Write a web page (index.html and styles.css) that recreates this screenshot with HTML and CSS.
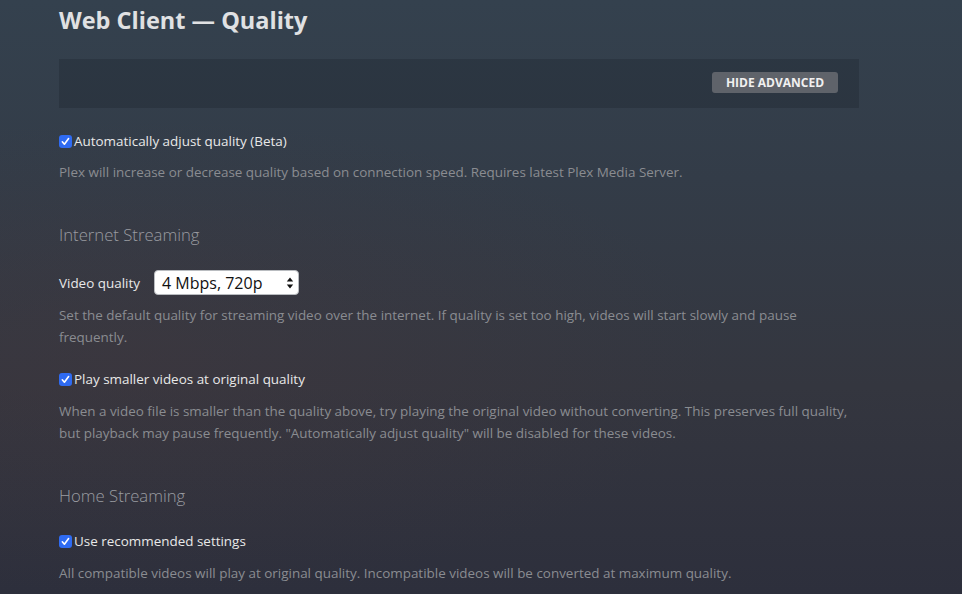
FILE: index.html
```html
<!DOCTYPE html>
<html>
<head>
<meta charset="utf-8">
<link rel="stylesheet" href="styles.css">
</head>
<body>
<div class="page">
  <h1 class="title">Web Client — Quality</h1>
  <div class="bar">
    <button class="btn">Hide Advanced</button>
  </div>

  <div class="group first">
    <label class="check-row"><span class="cb"><svg viewBox="0 0 13 13" width="13" height="13"><path d="M3.3 6.8 L5.4 9.2 L9.6 3.6" fill="none" stroke="#fff" stroke-width="1.6" stroke-linecap="round" stroke-linejoin="round"/></svg></span>Automatically adjust quality (Beta)</label>
    <p class="desc">Plex will increase or decrease quality based on connection speed. Requires latest Plex Media Server.</p>
  </div>

  <h2 class="section">Internet Streaming</h2>
  <div class="group">
    <div class="select-row">
      <span class="label">Video quality</span>
      <div class="select"><span>4 Mbps, 720p</span><svg class="arrows" viewBox="0 0 8 12" width="8" height="12"><path d="M4 0.5 L7.2 4.6 L0.8 4.6 Z M4 11.5 L7.2 7.4 L0.8 7.4 Z" fill="#111"/></svg></div>
    </div>
    <p class="desc">Set the default quality for streaming video over the internet. If quality is set too high, videos will start slowly and pause frequently.</p>
  </div>

  <div class="group">
    <label class="check-row"><span class="cb"><svg viewBox="0 0 13 13" width="13" height="13"><path d="M3.3 6.8 L5.4 9.2 L9.6 3.6" fill="none" stroke="#fff" stroke-width="1.6" stroke-linecap="round" stroke-linejoin="round"/></svg></span>Play smaller videos at original quality</label>
    <p class="desc">When a video file is smaller than the quality above, try playing the original video without converting. This preserves full quality, but playback may pause frequently. "Automatically adjust quality" will be disabled for these videos.</p>
  </div>

  <h2 class="section">Home Streaming</h2>
  <div class="group">
    <label class="check-row"><span class="cb"><svg viewBox="0 0 13 13" width="13" height="13"><path d="M3.3 6.8 L5.4 9.2 L9.6 3.6" fill="none" stroke="#fff" stroke-width="1.6" stroke-linecap="round" stroke-linejoin="round"/></svg></span>Use recommended settings</label>
    <p class="desc">All compatible videos will play at original quality. Incompatible videos will be converted at maximum quality.</p>
  </div>
</div>
</body>
</html>
```

FILE: styles.css
```css
html, body {
  margin: 0;
  height: 100%;
}
body {
  font-family: "Open Sans", "Noto Sans", sans-serif;
  background:
    radial-gradient(ellipse 60% 40% at 15% 60%, rgba(70, 55, 60, 0.35), rgba(70, 55, 60, 0) 100%),
    linear-gradient(180deg, #34414e 0%, #333c48 30%, #34363f 65%, #2d2f3c 100%);
  color: #eee;
  overflow: hidden;
}
.page {
  width: 800px;
  padding: 4px 0 0 59px;
}
.title {
  margin: 0;
  font-size: 23.5px;
  line-height: 32px;
  font-weight: 700;
  color: #e0e1e3;
}
.bar {
  margin-top: 23px;
  height: 49px;
  background: rgba(20, 25, 32, 0.22);
  display: flex;
  align-items: center;
  justify-content: flex-end;
  padding-right: 21px;
  box-sizing: border-box;
}
.btn {
  font-family: "Open Sans", sans-serif;
  font-size: 12px;
  font-weight: 700;
  text-transform: uppercase;
  color: #f0f0f0;
  background: #5f636a;
  border: 0;
  border-radius: 3px;
  height: 21px;
  width: 126px;
  padding: 0;
  margin-top: -2px;
  line-height: 21px;
}
.group {
  margin-top: 21px;
}
.group.first {
  margin-top: 23px;
}
.check-row {
  display: flex;
  align-items: center;
  height: 20px;
  font-size: 13.45px;
  color: #e8e8e8;
}
.cb {
  width: 13px;
  height: 13px;
  background: #2f6bf2;
  border-radius: 3px;
  margin-right: 2px;
  display: flex;
}
.desc {
  margin: 11px 0 0;
  font-size: 13.45px;
  line-height: 22px;
  color: #8a8c91;
}
.group.first .desc {
  margin-top: 10px;
}
.section {
  margin: 40px 0 23px;
  font-size: 16.7px;
  line-height: 24px;
  font-weight: 300;
  color: #9a9ca1;
}
.section + .group {
  margin-top: 0;
}
.select-row {
  display: flex;
  align-items: center;
  height: 25px;
}
.label {
  font-size: 13.45px;
  color: #e8e8e8;
  width: 95px;
}
.select {
  width: 145px;
  height: 25px;
  box-sizing: border-box;
  background: #fff;
  border: 1px solid #b9bcc0;
  border-radius: 4px;
  display: flex;
  align-items: center;
  justify-content: space-between;
  padding: 0 4px 0 7px;
  font-size: 16px;
  color: #111;
}
.select-row + .desc {
  margin-top: 9px;
}
```
